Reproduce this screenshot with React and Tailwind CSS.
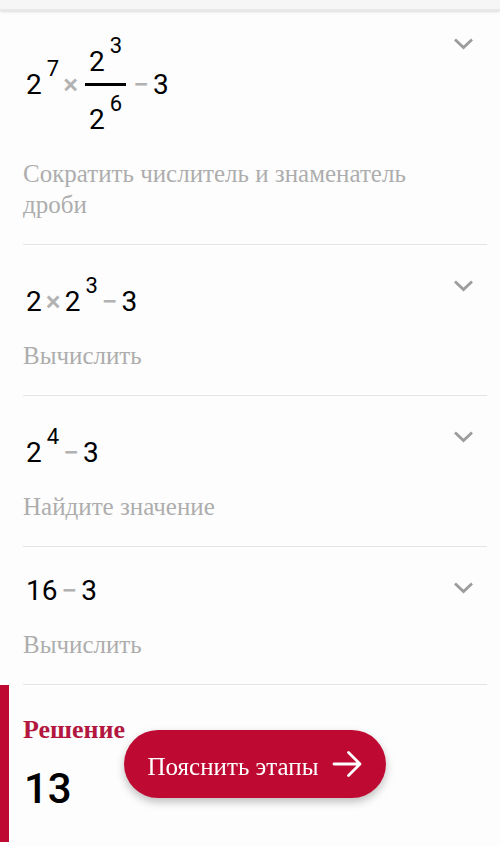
import React from 'react';

const Power = ({ base, exp }) => (
  <span className="flex items-start gap-[5px] h-7">
    <span>{base}</span>
    <sup className="top-0 -mt-[13px] text-[22px] leading-[22px]">{exp}</sup>
  </span>
);

const Op = ({ children }) => (
  <span className="mx-1 font-medium text-[#b2b2b2]">{children}</span>
);

const Fraction = ({ top, bottom }) => (
  <span className="flex flex-col mx-[3px]">
    <span className="px-1 pt-[13px] pb-[7px]">{top}</span>
    <span className="h-[3px] bg-black" />
    <span className="px-1 pt-5">{bottom}</span>
  </span>
);

const STEPS = [
  {
    id: 'reduce',
    label: 'Сократить числитель и знаменатель дроби',
    pad: 'pt-[9px]',
    mathPad: 'pt-[15px]',
    math: (
      <>
        <Power base="2" exp="7" />
        <Op>×</Op>
        <Fraction top={<Power base="2" exp="3" />} bottom={<Power base="2" exp="6" />} />
        <Op>−</Op>
        <span>3</span>
      </>
    ),
  },
  {
    id: 'multiply',
    label: 'Вычислить',
    mathPad: 'pt-[26px]',
    math: (
      <>
        <span>2</span>
        <Op>×</Op>
        <Power base="2" exp="3" />
        <Op>−</Op>
        <span>3</span>
      </>
    ),
  },
  {
    id: 'value',
    label: 'Найдите значение',
    mathPad: 'pt-[26px]',
    math: (
      <>
        <Power base="2" exp="4" />
        <Op>−</Op>
        <span>3</span>
      </>
    ),
  },
  {
    id: 'subtract',
    label: 'Вычислить',
    mathPad: 'pt-[13px]',
    math: (
      <>
        <span>16</span>
        <Op>−</Op>
        <span>3</span>
      </>
    ),
  },
];

const Step = ({ step }) => (
  <section className={`border-b border-[#e4e4e4] pb-6 ${step.pad || 'pt-[17px]'}`}>
    <div className="flex items-start justify-between">
      <div className={`flex items-center pl-[3px] font-[Roboto,sans-serif] text-[28px] leading-7 text-black ${step.mathPad}`}>
        {step.math}
      </div>
      <button type="button" aria-label={step.label} className="mt-3 px-3 text-[#9c9c9c]">
        <svg className="w-6 h-6" viewBox="0 0 24 24" fill="none" stroke="currentColor" strokeWidth="2.8">
          <path d="M4 7.500l8.500 8 8.500-8" />
        </svg>
      </button>
    </div>
    <p className="mt-6 mr-12 text-[25px] leading-[31px] text-[#adadad]">{step.label}</p>
  </section>
);

const App = () => (
  <div className="min-h-screen bg-[#fdfdfd] font-['Liberation_Serif',serif]">
    {/* Header edge */}
    <header className="h-[11px] bg-[#f6f6f6] border-b-2 border-[#e8e8e8] shadow-sm" />

    <main>
      <div className="pl-[23px] pr-[13px]">
        {STEPS.map(step => <Step key={step.id} step={step} />)}
      </div>

      {/* Result */}
      <section className="border-l-[9px] border-[#be0a32] pl-[14px] pt-[29px] pb-8">
        <h2 className="text-[26px] leading-[31px] font-bold text-[#b3173f]">Решение</h2>
        <p className="mt-[23px] pl-px font-[Roboto,sans-serif] text-[42px] leading-[42px] font-medium text-black">13</p>
      </section>
    </main>

    {/* Floating action */}
    <div className="fixed inset-x-0 bottom-12 flex justify-center pl-[23px] pr-[13px]">
      <button type="button" className="flex items-center gap-3 h-[68px] px-6 rounded-full bg-[#be0a32] text-white shadow-[0_4px_8px_rgba(0,0,0,0.25)]">
        <span className="pt-1 text-[25px] leading-[31px]">Пояснить этапы</span>
        <svg className="w-8 h-8" viewBox="0 0 32 32" fill="none" stroke="currentColor" strokeWidth="2.8" strokeLinecap="round" strokeLinejoin="round">
          <path d="M4 16h26M18.500 4.500l11.500 11.500-11.500 11.500" />
        </svg>
      </button>
    </div>
  </div>
);

export default App;
